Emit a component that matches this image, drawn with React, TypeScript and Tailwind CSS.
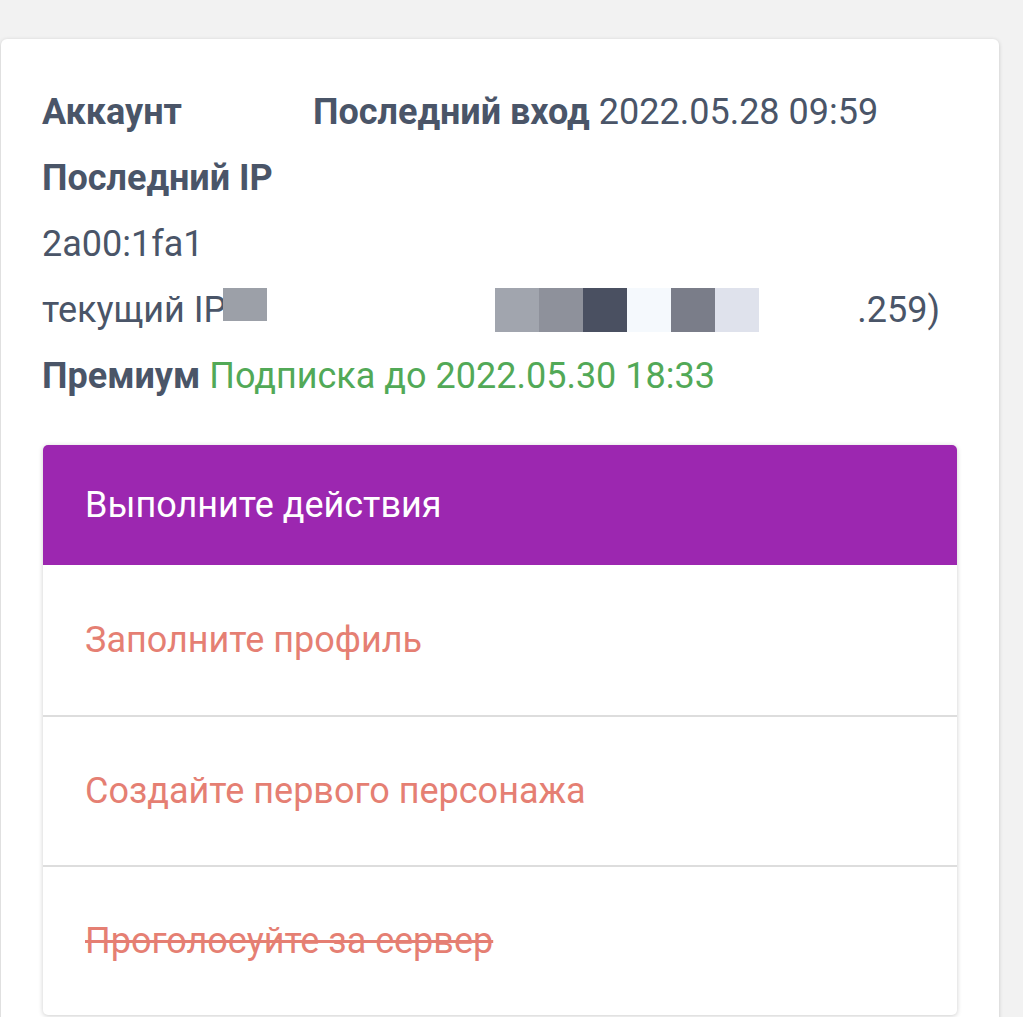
import React from "react";

const TASKS = [
  { label: "Заполните профиль", done: false },
  { label: "Создайте первого персонажа", done: false },
  { label: "Проголосуйте за сервер", done: true },
];

const REDACT = ["#a1a5ae", "#8e919b", "#4a5061", "#f5f9fd", "#7a7d89", "#dfe2ec"];

export default function App() {
  return (
    <div className="min-h-[1017px] bg-[#f2f2f2] pt-[39px] overflow-hidden" style={{ fontFamily: "Roboto, 'Noto Sans', sans-serif" }}>
      <div className="ml-[1px] w-[998px] bg-white rounded-md shadow-[0_1px_4px_rgba(0,0,0,0.18)] pt-[40px] pl-[41px] pr-[42px] pb-[40px] text-[36px] text-[#4a5568]">
        <div className="leading-[66px]">
          <div className="flex">
            <span className="w-[271px] font-bold">Аккаунт</span>
            <span>
              <b>Последний вход</b> 2022.05.28 09:59
            </span>
          </div>
          <div className="font-bold">Последний IP</div>
          <div>2a00:1fa1</div>
          <div className="flex items-center whitespace-nowrap">
            <span>текущий IP</span>
            <span className="-ml-[3px] w-[44px] h-[33px] bg-[#9ca0a8] -mt-[12px]" />
            <span className="w-[228px]" />
            {REDACT.map((c) => (
              <span key={c} className="w-[44px] h-[44px]" style={{ background: c }} />
            ))}
            <span className="w-[98px]" />
            <span>.259)</span>
          </div>
          <div>
            <b>Премиум</b> <span className="text-[#52a957]">Подписка до 2022.05.30 18:33</span>
          </div>
        </div>

        <div className="mt-[36px] ml-[1px] rounded-[5px] overflow-hidden bg-white shadow-[0_1px_5px_rgba(0,0,0,0.2)]">
          <div className="h-[120px] bg-[#9c27b0] px-[42px] flex items-center text-white">
            Выполните действия
          </div>
          {TASKS.map((t, i) => (
            <div
              key={t.label}
              className={`h-[150px] px-[42px] flex items-center text-[#e57f73] ${i > 0 ? "border-t-2 border-[#dddddd]" : ""}`}
            >
              <span className={t.done ? "line-through" : ""}>{t.label}</span>
            </div>
          ))}
        </div>
      </div>
    </div>
  );
}
